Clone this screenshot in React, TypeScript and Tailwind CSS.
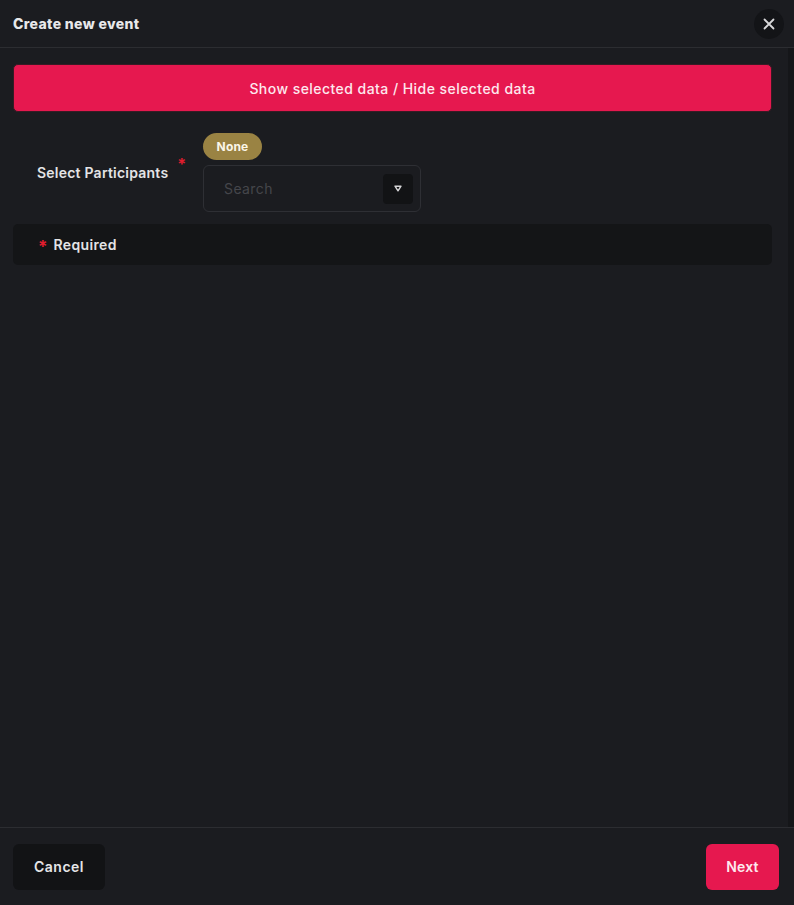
import React from "react";

export default function App() {
  return (
    <div
      className="w-[794px] h-[905px] bg-[#1b1c20] flex flex-col overflow-hidden text-[#ececec]"
      style={{ fontFamily: "Inter, 'Noto Sans', sans-serif" }}
    >
      {/* Header */}
      <div className="h-[48px] shrink-0 flex items-center justify-between pl-[13px] pr-[10px] border-b border-[#2c2d31]">
        <div className="text-[14px] font-extrabold tracking-[0.35px] text-[#e8e8ea]">Create new event</div>
        <button className="w-[30px] h-[30px] rounded-full bg-[#131417] flex items-center justify-center">
          <svg width="12" height="12" viewBox="0 0 12 12" fill="none">
            <path d="M1.5 1.5L10.5 10.5M10.5 1.5L1.5 10.5" stroke="#d8d8da" strokeWidth="1.8" strokeLinecap="round" />
          </svg>
        </button>
      </div>

      {/* Body */}
      <div className="flex-1 flex min-h-0">
        <div className="flex-1 pt-[16px] pl-[13px] pr-[16px] flex flex-col">
          <button className="h-[48px] w-full rounded-[5px] bg-[#e6184f] border border-[#3a1a24] text-[14px] font-medium tracking-[0.45px] text-[#fde8ee]">
            Show selected data / Hide selected data
          </button>

          <div className="flex mt-[21px]">
            <div className="w-[190px] flex items-start pl-[24px] pt-[29px]">
              <span className="text-[14px] font-semibold tracking-[0.22px] text-[#e4e4e6]">Select Participants</span>
              <span className="text-[#e11d2e] text-[16px] leading-none ml-[9px] mt-[-6px] font-bold">*</span>
            </div>
            <div className="flex flex-col">
              <div className="h-[27px] w-[59px] rounded-full bg-[#9a8343] flex items-center justify-center text-[12px] font-bold tracking-[0.2px] text-[#fbf6e8]">
                None
              </div>
              <div className="mt-[5px] w-[218px] h-[47px] rounded-[6px] border border-[#2e2f34] flex items-center justify-between pl-[20px] pr-[7px]">
                <span className="text-[14px] tracking-[0.4px] text-[#45464b]">Search</span>
                <div className="w-[30px] h-[30px] rounded-[4px] bg-[#121315] flex items-center justify-center">
                  <svg width="8" height="7" viewBox="0 0 8 7" fill="none">
                    <path d="M1 1.2H7L4 5.8Z" stroke="#d6d6d8" strokeWidth="1.4" strokeLinejoin="round" />
                  </svg>
                </div>
              </div>
            </div>
          </div>

          <div className="mt-[12px] h-[41px] w-full rounded-[5px] bg-[#141517] flex items-center pl-[25px]">
            <span className="text-[#e11d2e] text-[17px] font-bold leading-none mt-[6px]">*</span>
            <span className="ml-[6px] text-[14px] font-semibold tracking-[0.35px] text-[#e4e4e6]">Required</span>
          </div>
        </div>
        <div className="w-[6px] bg-[#151619]" />
      </div>

      {/* Footer */}
      <div className="h-[78px] shrink-0 border-t border-[#2c2d31] flex items-center justify-between pl-[13px] pr-[15px]">
        <button className="w-[92px] h-[46px] rounded-[6px] bg-[#121315] text-[14px] font-semibold tracking-[0.5px] text-[#e6e6e8]">
          Cancel
        </button>
        <button className="w-[73px] h-[46px] rounded-[6px] bg-[#e6184f] text-[14px] font-semibold tracking-[0.2px] text-[#fde8ee]">
          Next
        </button>
      </div>
    </div>
  );
}
